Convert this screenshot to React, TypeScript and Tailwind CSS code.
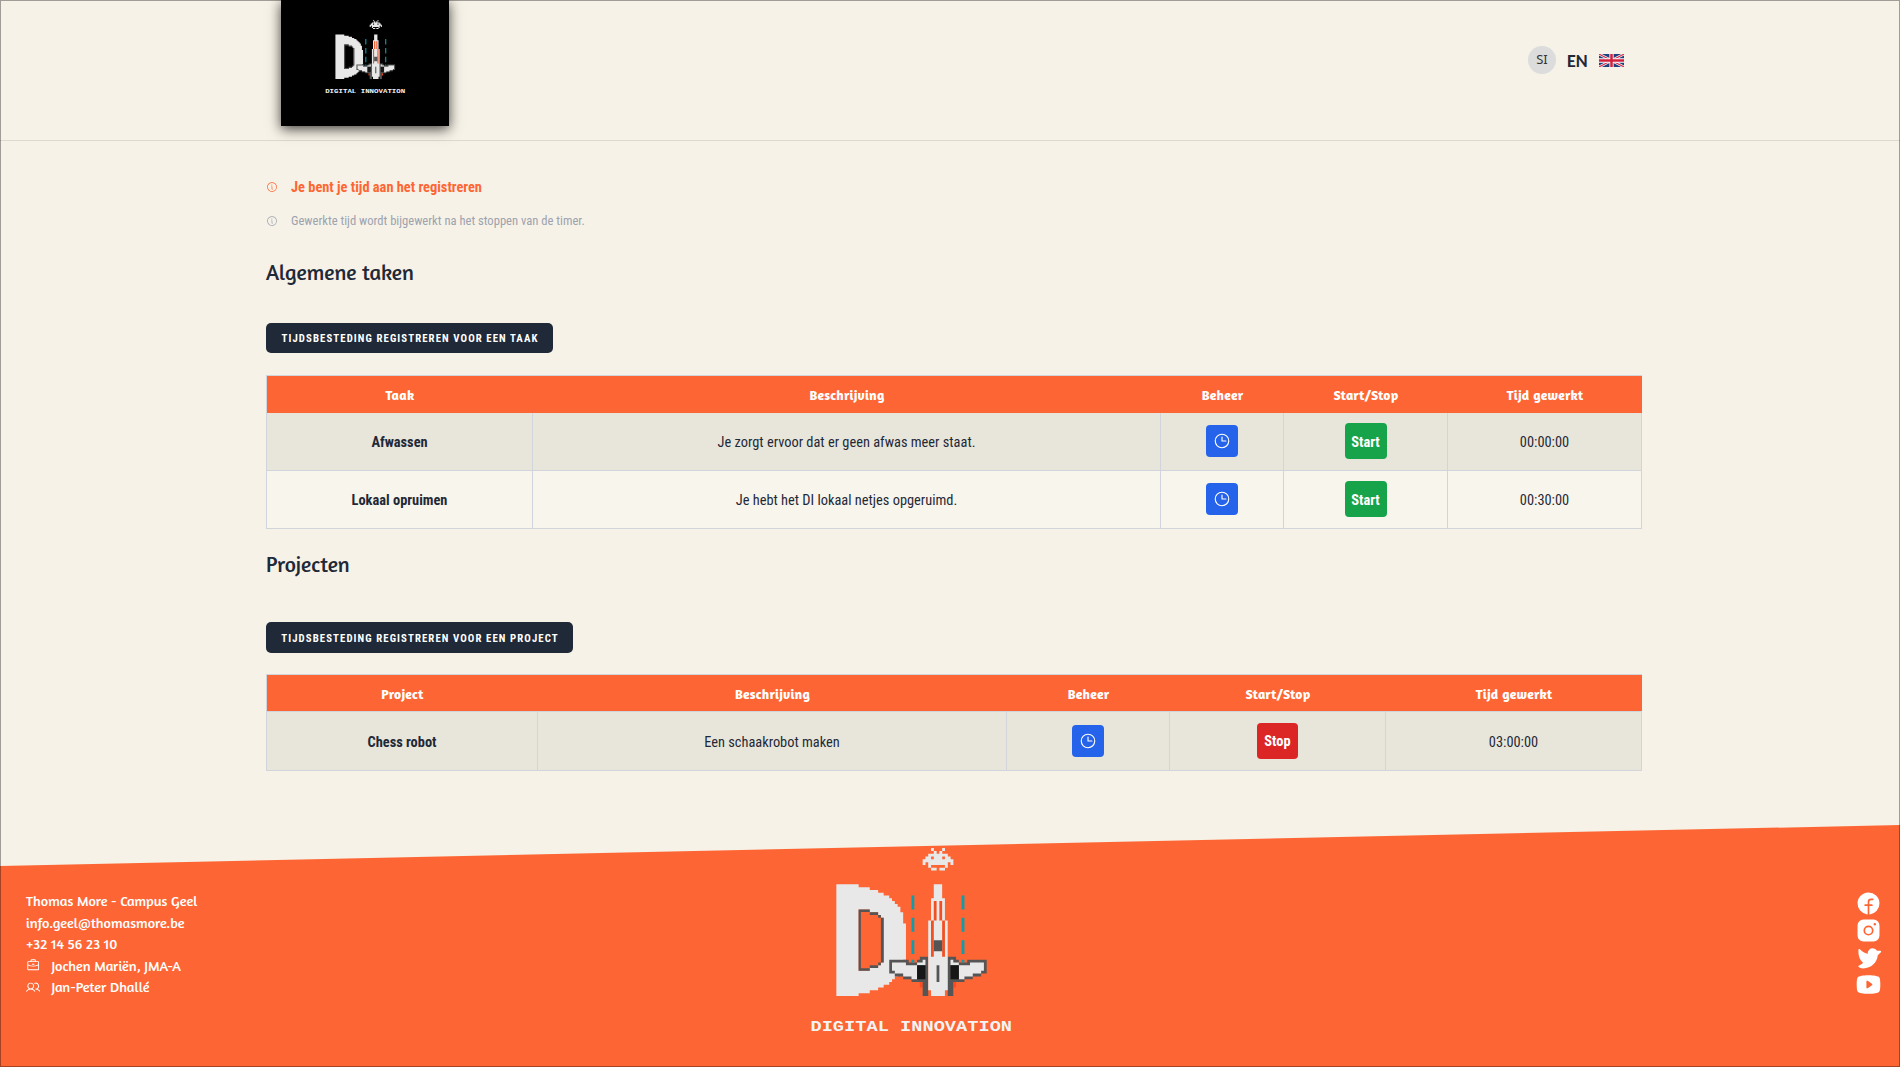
import type { ReactNode } from "react";
import {
  PiBriefcase,
  PiClock,
  PiFacebookLogoFill,
  PiInfo,
  PiInstagramLogoFill,
  PiTwitterLogoFill,
  PiUsers,
  PiYoutubeLogoFill,
} from "react-icons/pi";

const INVADER = [
  "...x...x...",
  "....x.x....",
  "..xxxxxxx..",
  ".xx.xxx.xx.",
  "xxxxxxxxxxx",
  "x.xxxxxxx.x",
  "..x.....x..",
  "...xx.xx...",
];

function Wing() {
  return (
    <g>
      <path fill="#ff4a20" d="M30 35h1v2h-1z" />
      <path fill="#555555" d="M19 27H26V28H29V27H30V26H33V40H31V35H27V34H24V33H21V32H19Z" />
      <path fill="#e8e8e8" d="M20 28H25V29H29V28H31V27H32V29H29V34H27V33H24V32H21V31H20Z" />
      <path fill="#171717" d="M29 29h3v5h-3z" />
      <path fill="#0f9cab" d="M27 4h1v5h-1zM27 12h1v5h-1zM27 20h1v5h-1zM27 27h1v1h-1z" />
    </g>
  );
}

function Logo({ className }: { className: string }) {
  return (
    <svg className={className} viewBox="-14.85 -17.7 86.2 75.3" preserveAspectRatio="none">
      <path
        fill="#e8e8e8"
        fillRule="evenodd"
        d="M0 0H8V1H12V2H15V3H17V4H19V5H20V6H21V7H22V8H23V10H24V14H25V27H24V31H23V32H22V33H21V34H20V35H19V36H17V37H15V38H12V39H8V40H0ZM8 9V31H12V30H15V29H16V28H17V12H16V11H15V10H12V9Z"
      />
      <path
        fill="#555555"
        fillRule="evenodd"
        d="M8 9H12V10H15V11H16V12H17V28H16V29H15V30H12V31H8ZM8.8 9.9V30.1H12V29H15V28H16V12H15V11H12V9.9Z"
      />
      <Wing />
      <g transform="translate(73 0) scale(-1 1)">
        <Wing />
      </g>
      <path fill="#e8e8e8" d="M35 0H38V5H39V13H40V38H39V40H34V38H33V13H34V5H35Z" />
      <path fill="#f25022" d="M35 6h1v7h-1zM37 6h1v7h-1zM34 13h1v13h-1zM38 13h1v13h-1z" />
      <path fill="#555555" d="M35 20h3v4h-3zM36 29h1v6h-1z" />
      <path
        fill="#e8e8e8"
        d={INVADER.flatMap((row, y) =>
          row.split("").map((c, x) => (c === "x" ? `M${31 + x} ${y - 13}h1.03v1.03h-1.03z` : "")),
        ).join("")}
      />
      <text
        x={-9.3}
        y={52.6}
        fill="#f3f3f3"
        className="font-['Liberation_Mono'] text-[5.4px] font-bold"
        textLength={72.4}
        lengthAdjust="spacingAndGlyphs"
      >
        DIGITAL INNOVATION
      </text>
    </svg>
  );
}

function Flag() {
  return (
    <svg className="h-[13px] w-[25px]" viewBox="0 0 60 30" preserveAspectRatio="none">
      <path fill="#1f3f7f" d="M0 0h60v30H0z" />
      <path stroke="#fff" strokeWidth="6" d="M0 0l60 30M60 0L0 30" />
      <path stroke="#d2304a" strokeWidth="2.6" d="M0 0l60 30M60 0L0 30" />
      <path stroke="#fff" strokeWidth="10" d="M30 0v30M0 15h60" />
      <path stroke="#d2203c" strokeWidth="6" d="M30 0v30M0 15h60" />
    </svg>
  );
}

type Row = { name: string; text: string; running: boolean; time: string };

function TimeTable({ first, cols, rows, headClass, rowClass }: { first: string; cols: string[]; rows: Row[]; headClass: string; rowClass: string }) {
  const heads = [first, "Beschrijving", "Beheer", "Start/Stop", "Tijd gewerkt"];
  const border = "border-r border-b border-[#d1d5db]";
  return (
    <table className="w-[1376px] table-fixed border-separate border-spacing-0 border-t border-l border-[#d1d5db] text-center text-[14.4px] leading-5 text-[#1f2937]">
      <colgroup>
        {cols.map((c, i) => (
          <col key={i} className={c} />
        ))}
      </colgroup>
      <thead>
        <tr className={headClass}>
          {heads.map((h) => (
            <th key={h} className="border-b border-inherit bg-[#fd6634] p-0 pt-px font-['Amaranth',Lato,sans-serif] text-[13.7px] font-bold tracking-[0.2px] text-white">
              {h}
            </th>
          ))}
        </tr>
      </thead>
      <tbody>
        {rows.map((r) => (
          <tr key={r.name} className={`${rowClass} odd:bg-[#e8e6db] even:bg-[#f8f5ec]`}>
            <td className={`${border} p-0 pt-[3px] font-bold`}>{r.name}</td>
            <td className={`${border} p-0 pt-[3px]`}>{r.text}</td>
            <td className={`${border} p-0 pb-px`}>
              <button className="inline-flex size-8 items-center justify-center rounded-[4px] bg-[#2563eb] align-middle text-white">
                <PiClock className="size-[18px]" />
              </button>
            </td>
            <td className={`${border} p-0 pb-px`}>
              <button
                className={
                  r.running
                    ? "inline-flex h-9 w-[41px] items-center justify-center rounded-[4px] bg-[#dc2626] pt-[3px] align-middle font-bold text-white"
                    : "inline-flex h-9 w-[42px] items-center justify-center rounded-[4px] bg-[#16a34a] pt-[3px] align-middle font-bold text-white"
                }
              >
                {r.running ? "Stop" : "Start"}
              </button>
            </td>
            <td className={`${border} p-0 pt-[3px]`}>{r.time}</td>
          </tr>
        ))}
      </tbody>
    </table>
  );
}

function Heading({ children }: { children: ReactNode }) {
  return <h2 className="h-8 font-['Amaranth',Lato,sans-serif] text-[21.6px] leading-8 text-[#1f2937]">{children}</h2>;
}

function RegisterButton({ children, className }: { children: ReactNode; className: string }) {
  return (
    <button className={`flex items-center justify-center rounded-[5px] bg-[#1f2937] pl-px text-[10.8px] font-bold tracking-[1.08px] whitespace-nowrap text-white uppercase ${className}`}>
      {children}
    </button>
  );
}

export default function App() {
  return (
    <div className="relative flex h-[1067px] w-full flex-col overflow-hidden bg-[#f7f2e7] font-['Roboto_Condensed',Roboto,sans-serif]">
      <header className="flex h-[141px] shrink-0 items-start justify-between border-b border-[#dcd9cf] pr-[276px] pl-[281px]">
        <div className="flex h-[126px] w-[168px] bg-black pt-[15.2px] pl-[38px] shadow-[0_3px_12px_rgba(0,0,0,0.75)]">
          <Logo className="h-[83.4px] w-[95.3px]" />
        </div>
        <div className="flex h-[119px] items-center">
          <span className="flex size-7 items-center justify-center rounded-full bg-[#dcdcdc] font-['Noto_Sans',sans-serif] text-[13px] text-[#333]">SI</span>
          <span className="ml-[11px] w-[21px] pt-0.5 font-['Carlito',Lato,sans-serif] text-[18px] leading-5 font-bold text-[#1f2937]">EN</span>
          <span className="ml-[11px] pt-px">
            <Flag />
          </span>
        </div>
      </header>

      <main className="ml-[266px] flex w-[1376px] grow flex-col items-start">
        <p className="mt-[37px] flex h-5 items-center text-[14.4px] font-bold text-[#fd6634]">
          <PiInfo className="-mt-0.5 mr-[13.5px] -ml-[0.5px] size-3" />
          Je bent je tijd aan het registreren
        </p>
        <p className="mt-[13px] flex h-5 items-center text-[12.6px] text-[#9ca3af]">
          <PiInfo className="mr-[13.5px] -ml-[0.5px] size-3" />
          Gewerkte tijd wordt bijgewerkt na het stoppen van de timer.
        </p>
        <div className="mt-[25px]">
          <Heading>Algemene taken</Heading>
        </div>
        <RegisterButton className="mt-[35px] h-[30px] w-[287px] pt-0.5">Tijdsbesteding registreren voor een taak</RegisterButton>
        <div className="mt-[22px]">
          <TimeTable
            first="Taak"
            cols={["w-[266px]", "w-[628px]", "w-[123px]", "w-[164px]", "w-[194px]"]}
            headClass="h-[37px] border-[#fd6634]"
            rowClass="h-[58px]"
            rows={[
              { name: "Afwassen", text: "Je zorgt ervoor dat er geen afwas meer staat.", running: false, time: "00:00:00" },
              { name: "Lokaal opruimen", text: "Je hebt het DI lokaal netjes opgeruimd.", running: false, time: "00:30:00" },
            ]}
          />
        </div>
        <div className="mt-[19px]">
          <Heading>Projecten</Heading>
        </div>
        <RegisterButton className="mt-[42px] h-[31px] w-[307px] pt-[3px]">Tijdsbesteding registreren voor een project</RegisterButton>
        <div className="mt-[21px]">
          <TimeTable
            first="Project"
            cols={["w-[271px]", "w-[469px]", "w-[163px]", "w-[216px]", "w-[256px]"]}
            headClass="h-[37px] border-[#d1d5db]"
            rowClass="h-[59px]"
            rows={[{ name: "Chess robot", text: "Een schaakrobot maken", running: true, time: "03:00:00" }]}
          />
        </div>
      </main>

      <footer className="flex h-[242px] shrink-0 items-start bg-[#fd6634] pl-[26px] text-white [clip-path:polygon(0_41px,100%_0,100%_100%,0_100%)]">
        <ul className="w-[240px] pt-[65px] font-['Amaranth',Lato,sans-serif] text-[14.3px] leading-[21.6px]">
          <li>Thomas More - Campus Geel</li>
          <li>info.geel@thomasmore.be</li>
          <li>+32 14 56 23 10</li>
          <li className="flex items-center">
            <PiBriefcase className="mr-[11px] size-[14.4px]" />
            Jochen Mariën, JMA-A
          </li>
          <li className="flex items-center">
            <PiUsers className="mr-[11px] size-[14.4px]" />
            Jan-Peter Dhallé
          </li>
        </ul>
        <Logo className="mt-[10px] ml-[529px] h-[210px] w-[240px] shrink-0" />
        <div className="ml-auto flex flex-col items-center pt-[65px] pr-[18px]">
          <PiFacebookLogoFill className="size-[27px]" />
          <PiInstagramLogoFill className="size-[27px]" />
          <PiTwitterLogoFill className="size-[27px]" />
          <PiYoutubeLogoFill className="size-[27px]" />
        </div>
      </footer>

      <div className="pointer-events-none absolute inset-0 border border-black/35" />
    </div>
  );
}
